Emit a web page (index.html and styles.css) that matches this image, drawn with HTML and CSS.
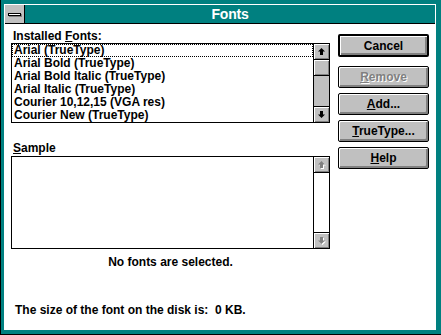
FILE: index.html
```html
<!DOCTYPE html>
<html lang="en">
<head>
    <meta charset="UTF-8">
    <title>Fonts</title>
    <link rel="stylesheet" href="styles.css">
</head>
<body>
    <div class="window">
        <div class="dialog">
            <div class="titlebar">
                <div class="sysmenu"><span class="sysbar"></span></div>
                <div class="title">Fonts</div>
            </div>

            <div class="content">
                <div class="left">
                    <div class="label">Installed <u>F</u>onts:</div>
                    <div class="listbox">
                        <ul class="items">
                            <li class="focused">Arial (TrueType)</li>
                            <li>Arial Bold (TrueType)</li>
                            <li>Arial Bold Italic (TrueType)</li>
                            <li>Arial Italic (TrueType)</li>
                            <li>Courier 10,12,15 (VGA res)</li>
                            <li>Courier New (TrueType)</li>
                        </ul>
                        <div class="scrollbar">
                            <div class="arrow arrow-up">
                                <svg width="7" height="7" viewBox="0 0 7 7"><path d="M3.5 0 L7 3.5 L5 3.5 L5 7 L2 7 L2 3.5 L0 3.5 Z" fill="#000"/></svg>
                            </div>
                            <div class="thumb"></div>
                            <div class="track"></div>
                            <div class="arrow arrow-down">
                                <svg width="7" height="7" viewBox="0 0 7 7"><path d="M3.5 7 L7 3.5 L5 3.5 L5 0 L2 0 L2 3.5 L0 3.5 Z" fill="#000"/></svg>
                            </div>
                        </div>
                    </div>

                    <div class="label label-sample"><u>S</u>ample</div>
                    <div class="samplebox">
                        <div class="sample-area"></div>
                        <div class="scrollbar">
                            <div class="arrow arrow-up disabled">
                                <svg width="8" height="8" viewBox="0 0 8 8"><path d="M4.5 1 L8 4.5 L6 4.5 L6 8 L3 8 L3 4.5 L1 4.5 Z" fill="#fff"/><path d="M3.5 0 L7 3.5 L5 3.5 L5 7 L2 7 L2 3.5 L0 3.5 Z" fill="#808080"/></svg>
                            </div>
                            <div class="track track-white"></div>
                            <div class="arrow arrow-down disabled">
                                <svg width="8" height="8" viewBox="0 0 8 8"><path d="M4.5 8 L8 4.5 L6 4.5 L6 1 L3 1 L3 4.5 L1 4.5 Z" fill="#fff"/><path d="M3.5 7 L7 3.5 L5 3.5 L5 0 L2 0 L2 3.5 L0 3.5 Z" fill="#808080"/></svg>
                            </div>
                        </div>
                    </div>

                    <div class="status">No fonts are selected.</div>
                </div>

                <div class="buttons">
                    <button class="btn btn-default">Cancel</button>
                    <button class="btn btn-disabled"><u>R</u>emove</button>
                    <button class="btn"><u>A</u>dd...</button>
                    <button class="btn"><u>T</u>rueType...</button>
                    <button class="btn"><u>H</u>elp</button>
                </div>
            </div>

            <div class="disk-size">The size of the font on the disk is:&nbsp; 0 KB.</div>
        </div>
    </div>
</body>
</html>
```

FILE: styles.css
```css
body {
    margin: 0;
    font-family: "Liberation Sans", Arial, sans-serif;
    font-weight: bold;
    font-size: 12px;
    color: #000;
}
.window {
    width: 441px;
    height: 335px;
    box-sizing: border-box;
    background-color: #008080;
    border-left: 1px solid #000;
    border-bottom: 1px solid #000;
    padding: 4px 0 0 3px;
}
.dialog {
    width: 432px;
    height: 326px;
    box-sizing: border-box;
    background-color: #fff;
    border: 1px solid #fff;
    border-bottom: none;
    position: relative;
}
.titlebar {
    display: flex;
    height: 18px;
    background-color: #008080;
    border-bottom: 1px solid #000;
}
.sysmenu {
    width: 19px;
    background-color: #c0c0c0;
    border-right: 1px solid #000;
    display: flex;
    align-items: center;
    justify-content: center;
}
.sysbar {
    display: block;
    width: 11px;
    height: 1px;
    background-color: #fff;
    border: 1px solid #000;
    box-shadow: 1px 1px 0 #808080;
    margin-left: -1px;
}
.title {
    flex: 1;
    color: #fff;
    text-align: center;
    line-height: 18px;
    font-size: 14px;
    letter-spacing: -0.2px;
}
.content {
    display: flex;
    padding: 5px 0 0 6px;
}
.left {
    width: 319px;
}
.label {
    height: 14px;
    line-height: 14px;
    padding-left: 2px;
}
.label-sample {
    margin-top: 18px;
}
.listbox, .samplebox {
    display: flex;
    border: 1px solid #000;
    overflow: hidden;
}
.listbox {
    height: 78px;
}
.samplebox {
    margin-top: 1px;
    height: 91px;
}
.items {
    flex: 1;
    list-style: none;
    margin: 0;
    padding: 0;
    overflow: hidden;
}
.items li {
    height: 13px;
    line-height: 13px;
    padding-left: 2px;
    white-space: nowrap;
    box-sizing: border-box;
}
.items li.focused {
    outline: 1px dotted #000;
    outline-offset: -1px;
}
.sample-area {
    flex: 1;
}
.scrollbar {
    width: 15px;
    border-left: 1px solid #000;
    display: flex;
    flex-direction: column;
    background-color: #c0c0c0;
}
.arrow, .thumb {
    height: 15px;
    background-color: #c0c0c0;
    box-shadow: inset 1px 1px 0 #fff, inset -1px -1px 0 #808080;
    display: flex;
    align-items: center;
    justify-content: center;
}
.arrow-up, .thumb {
    border-bottom: 1px solid #000;
}
.arrow-down {
    border-top: 1px solid #000;
}
.arrow.disabled svg {
    margin: 1px 0 0 1px;
}
.track {
    flex: 1;
}
.track-white {
    background-color: #fff;
}
.status {
    text-align: center;
    margin-top: 6px;
    line-height: 14px;
}
.buttons {
    display: flex;
    flex-direction: column;
    gap: 5px;
    margin-left: 8px;
    padding-top: 5px;
}
.btn {
    width: 91px;
    height: 22px;
    padding: 0;
    font-family: inherit;
    font-weight: bold;
    font-size: 12px;
    color: #000;
    background-color: #c0c0c0;
    border: 1px solid #000;
    border-radius: 2px;
    box-shadow: inset 1px 1px 0 #fff, inset -2px -2px 0 #808080;
}
.btn-default {
    height: 23px;
    border-width: 2px;
    margin-bottom: 4px;
}
.btn-disabled {
    color: #808080;
    text-shadow: 1px 1px 0 #fff;
}
.disk-size {
    position: absolute;
    left: 10px;
    top: 298px;
    line-height: 14px;
}
```
